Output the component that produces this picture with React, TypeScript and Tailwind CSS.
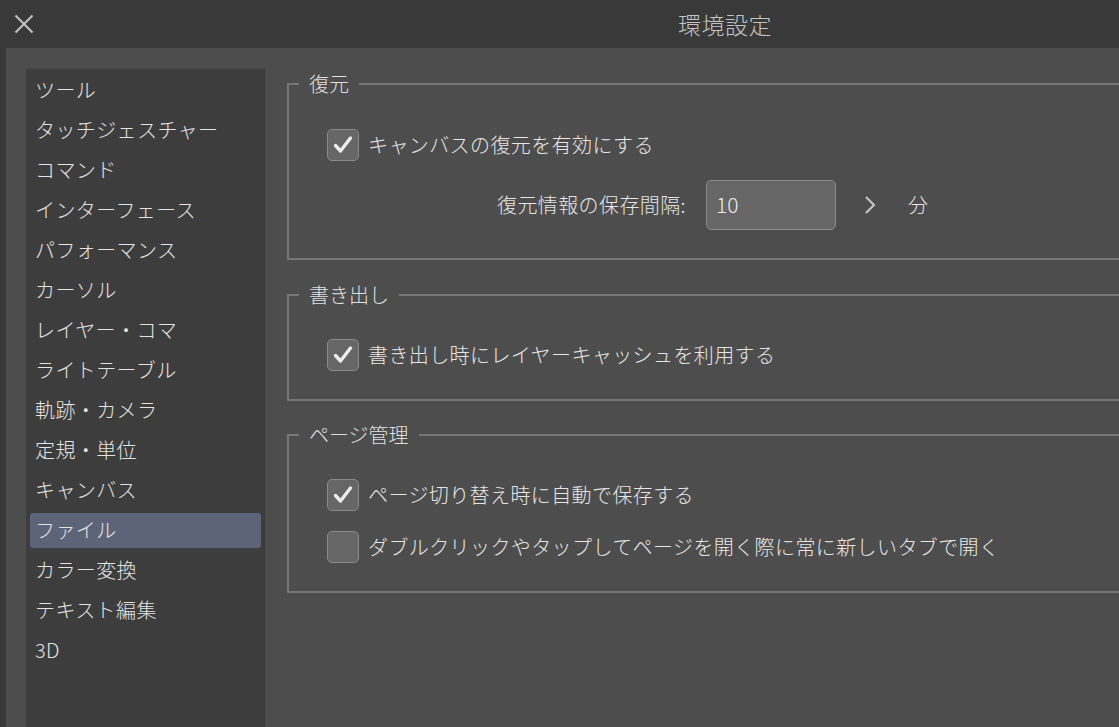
import React from 'react'

const menu = [
    'ツール',
    'タッチジェスチャー',
    'コマンド',
    'インターフェース',
    'パフォーマンス',
    'カーソル',
    'レイヤー・コマ',
    'ライトテーブル',
    '軌跡・カメラ',
    '定規・単位',
    'キャンバス',
    'ファイル',
    'カラー変換',
    'テキスト編集',
    '3D',
]

const Check = ({ checked, label }: { checked: boolean; label: string }) => {
    return (
        <div className="flex items-center gap-[9px] h-[32px]">
            <div className="w-[32px] h-[32px] rounded-[5px] bg-[#666666] border border-[#8a8a8a] flex items-center justify-center">
                {checked && (
                    <svg width="22" height="22" viewBox="0 0 22 22">
                        <path d="M3.5 11.5 L8.5 17 L18.5 4" fill="none" stroke="#ececec" strokeWidth="3.4" strokeLinecap="round" strokeLinejoin="round" />
                    </svg>
                )}
            </div>
            <span className="text-[20px] font-light tracking-[0.4px] text-[#e6e6e6] leading-none">{label}</span>
        </div>
    )
}

const Section = ({ title, children, className }: { title: string; children: React.ReactNode; className: string }) => {
    return (
        <fieldset className={'border-2 border-r-0 border-[#767676] pl-[38px] ' + className}>
            <legend className="ml-[-28px] px-[10px] text-[20px] font-light leading-[28px] text-[#e0e0e0]">{title}</legend>
            {children}
        </fieldset>
    )
}

const App = () => {
    return (
        <div className="w-[1119px] h-[727px] overflow-hidden bg-[#393939] flex flex-col font-['Noto_Sans_CJK_JP','Noto_Sans',sans-serif]">
            <div className="h-[48px] shrink-0 flex items-center">
                <div className="pl-[14px] w-[60px]">
                    <svg width="20" height="20" viewBox="0 0 20 20">
                        <path d="M1.5 1.5 L18.5 18.5 M18.5 1.5 L1.5 18.5" stroke="#c4c4c4" strokeWidth="2" />
                    </svg>
                </div>
                <div className="pl-[618px] text-[23px] font-light text-[#c4c4c4] tracking-[0.5px]">環境設定</div>
            </div>
            <div className="flex-1 ml-[6px] bg-[#4d4d4d] flex pt-[20px] pl-[20px] min-h-0">
                <div className="w-[240px] shrink-0 bg-[#3d3d3d] border-t border-r border-[#474747] pt-[1px]">
                    {menu.map((m) => (
                        <div key={m} className="h-[40px] flex items-center px-[4px]">
                            <div
                                className={
                                    'w-full h-[35px] flex items-center pl-[5px] rounded-[3px] text-[20px] font-light tracking-[0.4px] text-[#e4e4e4] ' +
                                    (m === 'ファイル' ? 'bg-[#5d6379]' : '')
                                }
                            >
                                {m}
                            </div>
                        </div>
                    ))}
                </div>
                <div className="flex-1 flex flex-col pl-[21px] pt-[2px]">
                    <Section title="復元" className="pt-[31px] pb-[28px]">
                        <Check checked label="キャンバスの復元を有効にする" />
                        <div className="flex items-center mt-[19px]">
                            <span className="w-[359px] text-right text-[20px] font-light tracking-[0.4px] text-[#e6e6e6]">復元情報の保存間隔:</span>
                            <div className="ml-[20px] w-[130px] h-[50px] rounded-[5px] bg-[#666666] border border-[#8a8a8a] flex items-center pl-[9px] text-[21px] font-light text-[#ececec]">
                                10
                            </div>
                            <svg className="ml-[27px]" width="14" height="22" viewBox="0 0 14 22">
                                <path d="M3 3 L11 11 L3 19" fill="none" stroke="#c8c8c8" strokeWidth="2" />
                            </svg>
                            <span className="ml-[31px] text-[20px] font-light text-[#e6e6e6]">分</span>
                        </div>
                    </Section>
                    <Section title="書き出し" className="mt-[21px] pt-[30px] pb-[28px]">
                        <Check checked label="書き出し時にレイヤーキャッシュを利用する" />
                    </Section>
                    <Section title="ページ管理" className="mt-[20px] pt-[30px] pb-[28px]">
                        <Check checked label="ページ切り替え時に自動で保存する" />
                        <div className="mt-[20px]">
                            <Check checked={false} label="ダブルクリックやタップしてページを開く際に常に新しいタブで開く" />
                        </div>
                    </Section>
                </div>
            </div>
        </div>
    )
}

export default App
